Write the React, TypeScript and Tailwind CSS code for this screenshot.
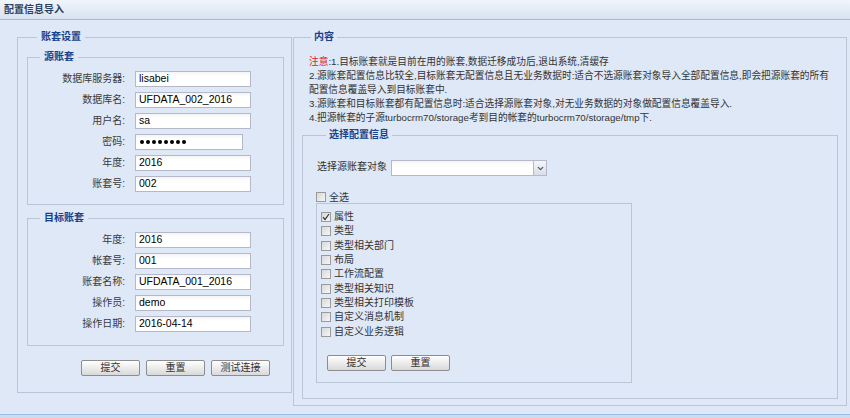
import { ChevronDown } from 'lucide-react'

const font = { fontFamily: '"Liberation Sans", "Noto Sans CJK SC", sans-serif' }

const sourceRows = [
  { label: '数据库服务器:', value: 'lisabei' },
  { label: '数据库名:', value: 'UFDATA_002_2016' },
  { label: '用户名:', value: 'sa' },
  { label: '密码:', value: '', password: true },
  { label: '年度:', value: '2016' },
  { label: '账套号:', value: '002' },
]

const targetRows = [
  { label: '年度:', value: '2016' },
  { label: '帐套号:', value: '001' },
  { label: '账套名称:', value: 'UFDATA_001_2016' },
  { label: '操作员:', value: 'demo' },
  { label: '操作日期:', value: '2016-04-14' },
]

const items = [
  { name: '属性', checked: true },
  { name: '类型', checked: false },
  { name: '类型相关部门', checked: false },
  { name: '布局', checked: false },
  { name: '工作流配置', checked: false },
  { name: '类型相关知识', checked: false },
  { name: '类型相关打印模板', checked: false },
  { name: '自定义消息机制', checked: false },
  { name: '自定义业务逻辑', checked: false },
]

function Field({ label, value, password }: { label: string; value: string; password?: boolean }) {
  return (
    <div className="flex items-center h-4">
      <span className="w-[97px] text-right text-[10px] text-[#3a3a3a] leading-4">{label}</span>
      <div
        className={
          'ml-[10px] h-4 border border-[#b5b8c8] bg-gradient-to-b from-[#f4f4f4] to-white to-[30%] flex items-center pl-[3px] text-[10.5px] text-black ' +
          (password ? 'w-[108px]' : 'w-[116px]')
        }
      >
        {password ? (
          <div className="flex gap-[2px] pl-[1px]">
            {[0, 1, 2, 3, 4, 5, 6, 7].map((i) => (
              <span key={i} className="w-[4px] h-[4px] rounded-full bg-black"></span>
            ))}
          </div>
        ) : (
          value
        )}
      </div>
    </div>
  )
}

function Btn({ text }: { text: string }) {
  return (
    <button className="w-[59px] h-4 border border-[#8d8d8d] rounded-[2px] bg-gradient-to-b from-white to-[#d9d9d9] text-[10px] text-[#333] leading-none flex items-center justify-center">
      {text}
    </button>
  )
}

function Check({ checked }: { checked?: boolean }) {
  return (
    <span className="w-[10px] h-[10px] border border-[#9a9a9a] bg-gradient-to-br from-[#d8d8d8] to-[#f6f6f6] flex items-center justify-center shrink-0">
      {checked && (
        <svg width="8" height="8" viewBox="0 0 8 8">
          <path d="M1 4.2 L3 6.5 L7 1" stroke="#333" strokeWidth="1.2" fill="none" />
        </svg>
      )}
    </span>
  )
}

export default function App() {
  return (
    <div className="w-[850px] h-[418px] bg-[#dfe8f6] overflow-hidden flex flex-col" style={font}>
      <div className="h-[20px] shrink-0 border-b border-[#99bbe8] bg-gradient-to-b from-[#f1f5fb] to-[#d7e3f3] flex items-center pl-[4px]">
        <span className="text-[10px] font-bold text-[#2b3f5e]">配置信息导入</span>
      </div>

      <div className="flex-1 flex pl-[17px] pt-[11px]">
        <fieldset className="min-w-0 w-[275px] h-[362px] border border-[#b9c6d8] px-[9px] pt-[8px]">
          <legend className="ml-[10px] px-[4px] text-[10px] font-bold text-[#15428b] leading-3">账套设置</legend>

          <fieldset className="min-w-0 w-[257px] border border-[#b9c6d8] pt-[8px] pb-[12px] flex flex-col gap-[5px]">
            <legend className="ml-[12px] px-[4px] text-[10px] font-bold text-[#15428b] leading-3">源账套</legend>
            {sourceRows.map((r) => (
              <Field key={r.label} label={r.label} value={r.value} password={r.password} />
            ))}
          </fieldset>

          <fieldset className="min-w-0 w-[257px] mt-[7px] border border-[#b9c6d8] pt-[8px] pb-[13px] flex flex-col gap-[5px]">
            <legend className="ml-[12px] px-[4px] text-[10px] font-bold text-[#15428b] leading-3">目标账套</legend>
            {targetRows.map((r) => (
              <Field key={r.label} label={r.label} value={r.value} />
            ))}
          </fieldset>

          <div className="flex gap-[6px] mt-[14px] pl-[54px]">
            <Btn text="提交" />
            <Btn text="重置" />
            <Btn text="测试连接" />
          </div>
        </fieldset>

        <fieldset className="min-w-0 ml-[1px] w-[554px] h-[375px] border border-[#b9c6d8] px-[8px] pt-[12px]">
          <legend className="ml-[9px] px-[3px] text-[10px] font-bold text-[#15428b] leading-3">内容</legend>

          <div className="pl-[7px] text-[9.7px] leading-[14px] text-[#333] whitespace-nowrap">
            <div>
              <span className="text-[#e0201a]">注意</span>:1.目标账套就是目前在用的账套,数据迁移成功后,退出系统,清缓存
            </div>
            <div>2.源账套配置信息比较全,目标账套无配置信息且无业务数据时:适合不选源账套对象导入全部配置信息,即会把源账套的所有</div>
            <div>配置信息覆盖导入到目标账套中.</div>
            <div>3.源账套和目标账套都有配置信息时:适合选择源账套对象,对无业务数据的对象做配置信息覆盖导入.</div>
            <div>4.把源帐套的子源turbocrm70/storage考到目的帐套的turbocrm70/storage/tmp下.</div>
          </div>

          <fieldset className="min-w-0 mt-[4px] h-[270px] border border-[#b9c6d8] pl-[14px] pt-[19px]">
            <legend className="ml-[9px] px-[3px] text-[10px] font-bold text-[#15428b] leading-3">选择配置信息</legend>

            <div className="flex items-start">
              <span className="text-[10px] text-[#333] leading-3 mt-[1px] w-[74px]">选择源账套对象</span>
              <div className="w-[156px] h-4 border border-[#b5b8c8] bg-gradient-to-b from-[#f4f4f4] to-white to-[30%] flex justify-end">
                <span className="w-[13px] h-full border-l border-[#b5b8c8] bg-gradient-to-b from-[#f4f6fa] to-[#d9dee6] flex items-center justify-center">
                  <ChevronDown size={9} strokeWidth={3.5} color="#4a5a70" />
                </span>
              </div>
            </div>

            <div className="flex items-center gap-[3px] mt-[15px] -ml-[1px] h-[12px]">
              <Check />
              <span className="text-[10px] text-[#333]">全选</span>
            </div>

            <div className="mt-0 -ml-[1px] w-[316px] h-[180px] border border-[#b9c6d8] pl-[4px] pt-[6px]">
              <div className="flex flex-col">
                {items.map((it) => (
                  <div key={it.name} className="flex items-center gap-[3px] h-[14.3px]">
                    <Check checked={it.checked} />
                    <span className="text-[10px] text-[#333] leading-3">{it.name}</span>
                  </div>
                ))}
              </div>
              <div className="flex gap-[5px] mt-[16px] pl-[6px]">
                <Btn text="提交" />
                <Btn text="重置" />
              </div>
            </div>
          </fieldset>
        </fieldset>
      </div>

      <div className="h-[4px] shrink-0 border-t border-[#99bbe8] bg-[#cddbef]"></div>
    </div>
  )
}
